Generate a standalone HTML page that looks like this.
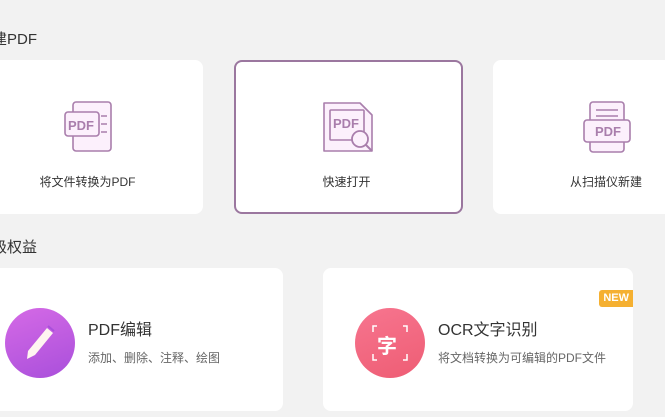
<!DOCTYPE html>
<html><head><meta charset="utf-8"><style>
*{margin:0;padding:0;box-sizing:border-box}
body{width:665px;height:417px;overflow:hidden;background:#f2f2f2;position:relative;font-family:"Liberation Sans","Noto Sans CJK SC",sans-serif;color:#333}
.t{position:absolute;font-size:15px;color:#333}
.c{position:absolute;background:#fff;border-radius:8px}
.lab{position:absolute;width:100%;text-align:center;font-size:12px;top:113px;color:#333}
svg{position:absolute}
.circ{position:absolute;width:70px;height:70px;border-radius:50%}
.h{position:absolute;font-size:16px;color:#333}
.s{position:absolute;font-size:12px;color:#666}
</style></head><body>
<div class="t" style="left:-8px;top:28px">建PDF</div>
<div class="c" style="left:-10px;top:60px;width:213px;height:154px">
<svg style="left:73px;top:40px" width="52" height="54" viewBox="0 0 52 54"><rect x="10" y="2" width="38" height="49" rx="3" fill="#fcf0fc" stroke="#a97eac" stroke-width="1.6"/><rect x="2" y="12" width="34" height="24" rx="3" fill="#fcf0fc" stroke="#a97eac" stroke-width="1.6"/><text x="5" y="30" font-family="Liberation Sans" font-weight="bold" font-size="13" fill="#a97eac">PDF</text><path d="M38 16h6M38 24h6M38 32h6" stroke="#a97eac" stroke-width="1.6"/></svg>
<div class="lab" style="left:-9px">将文件转换为PDF</div></div>
<div class="c" style="left:234px;top:60px;width:229px;height:154px;border:2px solid #9b779f">
<svg style="left:86px;top:39px" width="56" height="56" viewBox="0 0 56 56"><path d="M2 2h36l12 12v36H2z" fill="#fcf0fc" stroke="#a97eac" stroke-width="1.6" stroke-linejoin="round"/><rect x="8" y="9" width="34" height="30" rx="1" fill="#fcf0fc" stroke="#a97eac" stroke-width="1.6"/><text x="11" y="27" font-family="Liberation Sans" font-weight="bold" font-size="13" fill="#a97eac">PDF</text><circle cx="38" cy="38" r="8" fill="#fcf0fc" stroke="#a97eac" stroke-width="1.8"/><path d="M44 44l6 6" stroke="#a97eac" stroke-width="2"/></svg>
<div class="lab" style="top:111px;left:-2px">快速打开</div></div>
<div class="c" style="left:493px;top:60px;width:200px;height:154px">
<svg style="left:89px;top:40px" width="52" height="54" viewBox="0 0 52 54"><rect x="8" y="2" width="34" height="50" rx="3" fill="#fcf0fc" stroke="#a97eac" stroke-width="1.6"/><path d="M14 10h22M14 16h22" stroke="#a97eac" stroke-width="1.6"/><rect x="2" y="20" width="46" height="22" rx="3" fill="#fcf0fc" stroke="#a97eac" stroke-width="1.6"/><text x="13" y="36" font-family="Liberation Sans" font-weight="bold" font-size="13" fill="#a97eac">PDF</text></svg>
<div class="lab" style="left:13px">从扫描仪新建</div></div>
<div class="t" style="left:-8px;top:236px">级权益</div>
<div class="c" style="left:-10px;top:268px;width:293px;height:143px">
<div class="circ" style="left:15px;top:40px;background:linear-gradient(160deg,#d56ae6,#a94fdb)"></div>
<svg style="left:28px;top:54px" width="44" height="44" viewBox="0 0 44 44"><path d="M29 6l6 5-18 22-8 4 1-8z" fill="#fff5f0"/><path d="M30 4l6 5" stroke="#a94fdb" stroke-width="2"/></svg>
<div class="h" style="left:98px;top:48px">PDF编辑</div>
<div class="s" style="left:98px;top:81px">添加、删除、注释、绘图</div></div>
<div class="c" style="left:323px;top:268px;width:310px;height:143px">
<div class="circ" style="left:32px;top:40px;background:linear-gradient(160deg,#f7758f,#ee5d74)"></div>
<svg style="left:48px;top:56px" width="38" height="38" viewBox="0 0 38 38" fill="none" stroke="#fff" stroke-width="1.5"><path d="M2 8V2h4M32 2h4v6M2 30v6h4M36 30v6h-4"/></svg>
<div style="position:absolute;left:54px;top:62px;color:#fff;font-size:20px;font-weight:bold">字</div>
<div style="position:absolute;right:0;top:22px;background:#f5b031;color:#fff;font-size:11px;font-weight:bold;padding:2px 4px;border-radius:3px 0 0 3px;line-height:13px">NEW</div>
<div class="h" style="left:115px;top:48px">OCR文字识别</div>
<div class="s" style="left:115px;top:81px">将文档转换为可编辑的PDF文件</div></div>
</body></html>
